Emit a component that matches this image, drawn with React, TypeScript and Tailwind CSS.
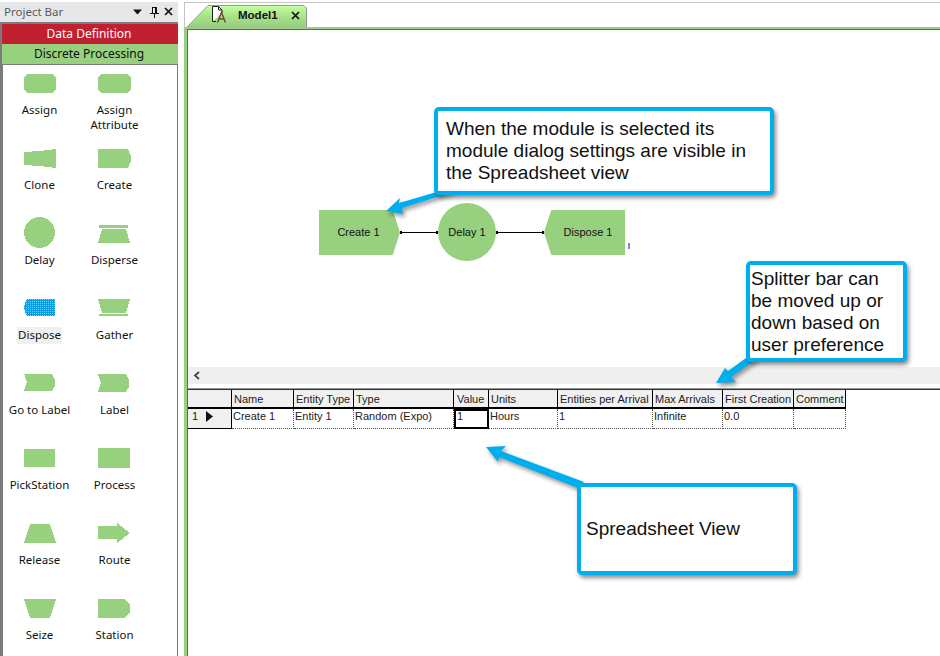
import React from 'react';

const GREEN = '#97d07f';

type Mod = { label: string; shape: React.ReactNode; selected?: boolean };

// palette shapes, 34x34 box, shape starts 7px down
const modules: Mod[] = [
  { label: 'Assign', shape: <path d="M4 7H29L33 11V22L29 26H4L1 22V11Z" /> },
  { label: 'Assign Attribute', shape: <path d="M3 7H29L33 11V22L29 26H3L0 22V11Z" /> },
  { label: 'Clone', shape: <path d="M1 10L17 9L33 7V26L17 24L1 23Z" /> },
  { label: 'Create', shape: <path d="M0 7H30L33 14V19L30 26H0Z" /> },
  { label: 'Delay', shape: <circle cx="16.5" cy="15.5" r="15.5" /> },
  { label: 'Disperse', shape: <path d="M1 8H30V11H1ZM4 12H28L32 26H0Z" /> },
  { label: 'Dispose', shape: <path d="M4 7H32V24H4L1 17V14Z" fill="url(#dots)" />, selected: true },
  { label: 'Gather', shape: <path d="M0 7H32L28 21H4ZM1 22H30V24H1Z" /> },
  { label: 'Go to Label', shape: <path d="M1 7H29L32 13V19L29 24H1L4 15Z" /> },
  { label: 'Label', shape: <path d="M0 7H28L31 13V20L28 25H0L3 16Z" /> },
  { label: 'PickStation', shape: <path d="M1 7H32V25H1Z" /> },
  { label: 'Process', shape: <path d="M0 6H32V26H0Z" /> },
  { label: 'Release', shape: <path d="M7 7H27L33 26H1Z" /> },
  { label: 'Route', shape: <path d="M0 9H19V6L32 16L19 26V22H0Z" /> },
  { label: 'Seize', shape: <path d="M1 7H33L27 26H7Z" /> },
  { label: 'Station', shape: <path d="M0 7H26L32 12V21L26 26H0Z" /> },
];

const columns = [
  { name: '', value: '' },
  { name: 'Name', value: 'Create 1' },
  { name: 'Entity Type', value: 'Entity 1' },
  { name: 'Type', value: 'Random (Expo)' },
  { name: 'Value', value: '1' },
  { name: 'Units', value: 'Hours' },
  { name: 'Entities per Arrival', value: '1' },
  { name: 'Max Arrivals', value: 'Infinite' },
  { name: 'First Creation', value: '0.0' },
  { name: 'Comment', value: '' },
];

function ProjectBar() {
  return (
    <div className="w-[178px] shrink-0 flex flex-col pt-[2px]">
      <div className="h-[20px] bg-[#e6e7e9] flex items-center pl-[4px] pr-[4px] text-[11.5px] text-[#5a5a5a] font-['Noto_Sans',sans-serif]">
        <span className="flex-1">Project Bar</span>
        <svg width="42" height="12" viewBox="0 0 42 12" className="text-[#111]">
          <path d="M1 3.5H10L5.5 8.5Z" fill="currentColor" />
          <path d="M20 1H25V7H27V8H23V12H22V8H18V7H20ZM21 2V7H23V2Z" fill="currentColor" />
          <path d="M33 2L40 9M40 2L33 9" stroke="currentColor" strokeWidth="1.7" fill="none" />
        </svg>
      </div>
      <div className="flex-1 min-h-0 border-l-[2px] border-t-[2px] border-[#7b7b7b] flex flex-col overflow-hidden font-['Noto_Sans',sans-serif]">
        <div className="h-[20px] shrink-0 bg-[#c02030] text-white text-[12px] text-center leading-[20px] pr-[2px]">
          Data Definition
        </div>
        <div className="h-[21px] shrink-0 bg-[#97d07f] text-[#101010] text-[12px] text-center leading-[20px] pr-[2px] border-b border-[#7b7b7b]">
          Discrete Processing
        </div>
        <div className="flex-1 bg-white border-l border-r-[1px] border-[#7b7b7b] overflow-hidden">
          <div className="grid grid-cols-[75px_75px] -ml-[1px] pt-[2px]">
            {modules.map((m) => (
              <div key={m.label} className="h-[75px] flex flex-col items-center">
                <svg width="34" height="34" viewBox="0 0 34 34" fill={GREEN} shapeRendering="crispEdges">
                  <defs>
                    <pattern id="dots" width="2" height="2" patternUnits="userSpaceOnUse">
                      <rect width="2" height="2" fill="#0a9be0" />
                      <rect x="1" y="1" width="1" height="1" fill={GREEN} />
                    </pattern>
                  </defs>
                  {m.shape}
                </svg>
                <div
                  className={`text-[11.5px] text-center text-[#111] ${
                    m.selected
                      ? 'mt-[1px] bg-[#f0f0f0] w-[45px] h-[17px] leading-[15px]'
                      : 'mt-[1px] leading-[15px] px-[2px] w-[75px]'
                  }`}
                >
                  {m.label}
                </div>
              </div>
            ))}
          </div>
        </div>
      </div>
    </div>
  );
}

function Tab() {
  return (
    <div className="relative h-[23px] w-[121px] ml-[2px] flex items-center pl-[24px]">
      <svg width="121" height="23" viewBox="0 0 121 23" className="absolute left-0 top-0">
        <defs>
          <linearGradient id="tabFill" x1="0" y1="0" x2="0" y2="1">
            <stop offset="0" stopColor="#c4ff9f" />
            <stop offset="0.55" stopColor="#a6e088" />
            <stop offset="1" stopColor="#97d07f" />
          </linearGradient>
        </defs>
        <path d="M0.5 22.5L21 1.5H117L119.5 4V23H0.5Z" fill="url(#tabFill)" stroke="#9a9a9a" />
        <path d="M0.5 23H119.5" stroke="#97d07f" strokeWidth="1" />
      </svg>
      <svg width="18" height="18" viewBox="0 0 18 18" className="relative mt-[-2px]">
        <path d="M1.5 15.5V0.5H7.5L11 4V7M1.5 15.5H5" fill="#fff" stroke="#222" />
        <path d="M7.5 0.5V4H11" fill="none" stroke="#222" />
        <path d="M6.5 16.5L10.5 6.5L14.5 16.5M8 13H13" fill="none" stroke="#6b4a2a" strokeWidth="1.4" />
      </svg>
      <span className="relative ml-[9px] text-[11.5px] font-bold text-[#111]">Model1</span>
      <svg width="9" height="9" viewBox="0 0 9 9" className="relative ml-[13px]">
        <path d="M1 1L8 8M8 1L1 8" stroke="#111" strokeWidth="1.7" fill="none" />
      </svg>
    </div>
  );
}

function Connector({ x, w }: { x: number; w: number }) {
  return (
    <div className="absolute top-[202px] h-[1px] bg-black" style={{ left: x, width: w }}>
      <div className="absolute left-0 top-[-1px] w-[2px] h-[3px] bg-black" />
      <div className="absolute right-0 top-[-1px] w-[2px] h-[3px] bg-black" />
    </div>
  );
}

function Canvas() {
  // coordinates here are relative to the canvas, which starts at 188,30
  return (
    <div className="relative flex-1 bg-white">
      <div
        className="absolute left-[131px] top-[180px] w-[81px] h-[45px] bg-[#97d07f] flex items-center justify-center text-[11px] text-[#111] pr-[2px] [clip-path:polygon(0_0,91%_0,100%_50%,91%_100%,0_100%)]"
      >
        Create 1
      </div>
      <div className="absolute left-[250px] top-[173px] w-[58px] h-[58px] rounded-full bg-[#97d07f] flex items-center justify-center text-[11px] text-[#111]">
        Delay 1
      </div>
      <div
        className="absolute left-[356px] top-[180px] w-[81px] h-[45px] bg-[#97d07f] flex items-center justify-center text-[11px] text-[#111] pl-[7px] [clip-path:polygon(9%_0,100%_0,100%_100%,9%_100%,0_50%)]"
      >
        Dispose 1
      </div>
      <Connector x={212} w={38} />
      <Connector x={308} w={48} />
      <div className="absolute left-[440px] top-[213px] w-[2px] h-[6px] bg-[#8a7fd0]" />
    </div>
  );
}

function Sheet() {
  return (
    <div className="h-[266px] shrink-0 bg-white">
      <div className="grid grid-cols-[44px_62px_60px_100px_35px_69px_95px_70px_71px_52px] w-[658px] text-[11px] text-[#222]">
        {columns.map((c, i) => (
          <div
            key={'h' + i}
            className={`h-[19px] bg-[#f0f0f0] border-b-[2px] border-r border-black leading-[18px] truncate ${
              i === 4 ? 'pl-[3px]' : 'pl-[2px]'
            }`}
          >
            {c.name}
          </div>
        ))}
        {columns.map((c, i) => {
          if (i === 0) {
            return (
              <div key="row" className="h-[20px] bg-[#f0f0f0] border-b border-r border-black flex items-center pl-[4px] pb-[5px]">
                <span>1</span>
                <svg width="8" height="11" viewBox="0 0 8 11" className="ml-[8px]">
                  <path d="M0 0L7 5.5L0 11Z" fill="#111" />
                </svg>
              </div>
            );
          }
          if (i === 4) {
            return (
              <div key="val" className="h-[20px] border-[2px] border-black pl-[1px] leading-[10px] outline outline-black -outline-offset-1">
                {c.value}
              </div>
            );
          }
          return (
            <div
              key={'c' + i}
              className="h-[20px] border-b border-r border-dotted border-[#555] pl-[1px] leading-[14px] truncate"
            >
              {c.value}
            </div>
          );
        })}
      </div>
    </div>
  );
}

function Callout({ className, children }: { className: string; children: React.ReactNode }) {
  return (
    <div
      className={`absolute bg-white border-[4px] border-[#00aeef] rounded-[5px] shadow-[2px_3px_4px_rgba(0,0,0,0.45)] text-[19px] leading-[22px] text-[#111] ${className}`}
    >
      {children}
    </div>
  );
}

// the callout pointers, in page coordinates
function Pointers() {
  return (
    <svg
      width="940"
      height="656"
      viewBox="0 0 940 656"
      className="absolute left-0 top-0 pointer-events-none drop-shadow-[2px_3px_2px_rgba(0,0,0,0.4)]"
    >
      <g fill="#00aeef">
        <path d="M386 211L400 198L399 203L440 191H456L402 208L403 214Z" />
        <path d="M716 383L725 368L728 371L746 358H758L731 377L736 382Z" />
        <path d="M486 447L506 446L501 451L584 482L578 488L499 457L498 462Z" />
      </g>
    </svg>
  );
}

export default function App() {
  return (
    <div className="relative w-[940px] h-[656px] overflow-hidden bg-white flex font-['Liberation_Sans',Arial,sans-serif]">
      <ProjectBar />
      <div className="ml-[6px] flex-1 flex flex-col min-w-0 pt-[2px]">
        <div className="h-[25px] shrink-0 border-t border-l border-[#c4c4c4] pt-[1px]">
          <Tab />
        </div>
        <div className="flex-1 min-h-0 flex flex-col border-l-[3px] border-[#97d07f]">
          <div className="h-[2px] -ml-[3px] bg-[#97d07f] shrink-0" />
          <div className="flex-1 min-h-0 flex flex-col border-l-[1px] border-[#666]">
            <div className="h-[1px] bg-[#666] shrink-0" />
            <Canvas />
            <div className="h-[17px] shrink-0 bg-[#efefef] flex items-center pl-[5px]">
              <svg width="8" height="9" viewBox="0 0 8 9">
                <path d="M6 1L2 4.5L6 8" fill="none" stroke="#444" strokeWidth="1.8" />
              </svg>
            </div>
            <div className="h-[4px] shrink-0 bg-white" />
            <div className="h-[1px] shrink-0 bg-[#999]" />
            <div className="h-[1px] shrink-0 bg-[#333]" />
            <Sheet />
          </div>
        </div>
      </div>

      <Pointers />
      <Callout className="left-[434px] top-[107px] w-[340px] h-[88px] pl-[8px] pt-[7px]">
        When the module is selected its
        <br />
        module dialog settings are visible in
        <br />
        the Spreadsheet view
      </Callout>
      <Callout className="left-[746px] top-[261px] w-[161px] h-[101px] pl-[1px] pt-[3px]">
        Splitter bar can
        <br />
        be moved up or
        <br />
        down based on
        <br />
        user preference
      </Callout>
      <Callout className="left-[577px] top-[483px] w-[220px] h-[92px] pl-[5px] flex items-center">
        Spreadsheet View
      </Callout>
    </div>
  );
}
